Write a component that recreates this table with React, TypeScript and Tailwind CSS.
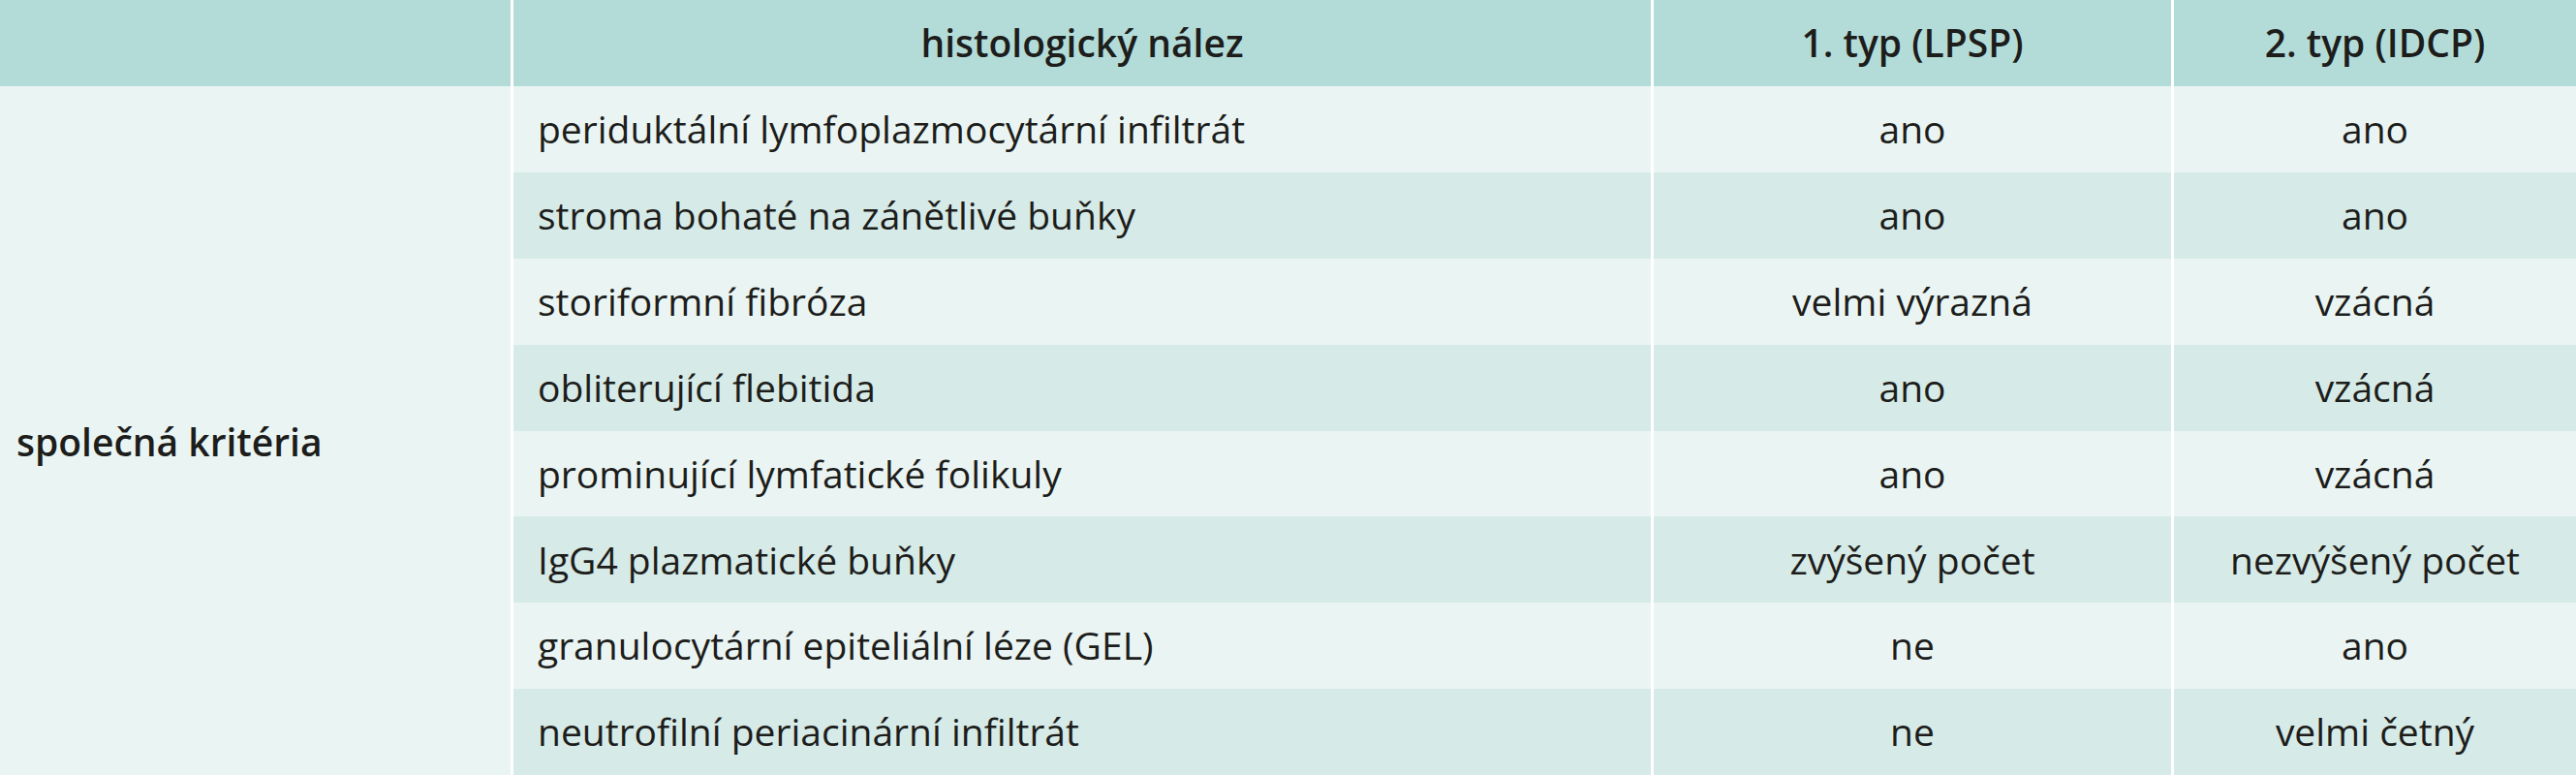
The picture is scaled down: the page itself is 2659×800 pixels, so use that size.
import React from 'react';

const rows = [
  { finding: 'periduktální lymfoplazmocytární infiltrát', lpsp: 'ano', idcp: 'ano' },
  { finding: 'stroma bohaté na zánětlivé buňky', lpsp: 'ano', idcp: 'ano' },
  { finding: 'storiformní fibróza', lpsp: 'velmi výrazná', idcp: 'vzácná' },
  { finding: 'obliterující flebitida', lpsp: 'ano', idcp: 'vzácná' },
  { finding: 'prominující lymfatické folikuly', lpsp: 'ano', idcp: 'vzácná' },
  { finding: 'IgG4 plazmatické buňky', lpsp: 'zvýšený počet', idcp: 'nezvýšený počet' },
  { finding: 'granulocytární epiteliální léze (GEL)', lpsp: 'ne', idcp: 'ano' },
  { finding: 'neutrofilní periacinární infiltrát', lpsp: 'ne', idcp: 'velmi četný' },
];

export default function App() {
  return (
    <div className="w-[2659px] h-[800px] bg-white font-['Open_Sans',sans-serif] text-[39px] text-[#1d1d1b]">
      <div className="grid h-full grid-cols-[527px_1174px_534px_415px] grid-rows-[89px_repeat(8,1fr)] gap-x-[3px]">
        {/* header */}
        <div className="bg-[#b3dcd9]" />
        <div className="bg-[#b3dcd9] flex items-center justify-center font-semibold">histologický nález</div>
        <div className="bg-[#b3dcd9] flex items-center justify-center font-semibold">1. typ (LPSP)</div>
        <div className="bg-[#b3dcd9] flex items-center justify-center font-semibold">2. typ (IDCP)</div>

        {/* body */}
        <div className="row-span-8 bg-[#eaf5f3] flex items-center pl-[17px] pt-[24px] font-semibold">společná kritéria</div>
        {rows.map((row, index) => {
          const bg = index % 2 === 0 ? 'bg-[#eaf5f3]' : 'bg-[#d6eae7]';
          return (
            <React.Fragment key={index}>
              <div className={`${bg} flex items-center pl-[25px]`}>{row.finding}</div>
              <div className={`${bg} flex items-center justify-center`}>{row.lpsp}</div>
              <div className={`${bg} flex items-center justify-center`}>{row.idcp}</div>
            </React.Fragment>
          );
        })}
      </div>
    </div>
  );
}
